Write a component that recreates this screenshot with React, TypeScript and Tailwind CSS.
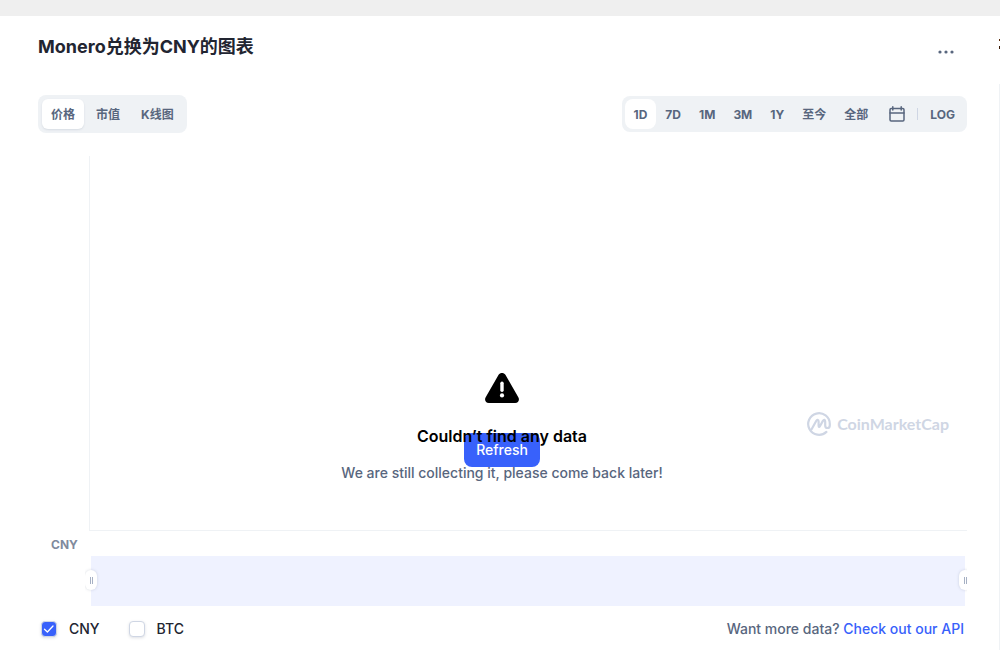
import { useState } from "react";

const chartTypes = ["价格", "市值", "K线图"];
const ranges = ["1D", "7D", "1M", "3M", "1Y", "至今", "全部"];

function DotsIcon() {
  return (
    <svg width="16" height="4" viewBox="0 0 16 4" fill="currentColor" aria-hidden="true">
      <circle cx="2" cy="2" r="1.6" />
      <circle cx="8" cy="2" r="1.6" />
      <circle cx="14" cy="2" r="1.6" />
    </svg>
  );
}

function CalendarIcon() {
  return (
    <svg width="16" height="16" viewBox="0 0 16 16" fill="none" stroke="currentColor" strokeWidth="1.5" strokeLinecap="round" strokeLinejoin="round" aria-hidden="true">
      <rect x="1" y="2.5" width="14" height="12.5" rx="1.2" />
      <path d="M1 7H15M3.8 0.8V4M12.2 0.8V4" />
    </svg>
  );
}

function WarningIcon() {
  return (
    <svg width="34" height="30" viewBox="0 0 34 30" aria-hidden="true">
      <path d="M13.6 1.8C15.1 -0.6 18.9 -0.6 20.4 1.8L33.3 24.3C34.9 27 33.3 30 30.2 30H3.8C0.7 30 -0.9 27 0.7 24.3Z" fill="#000" />
      <path d="M17 10.2V17.3" stroke="#fff" strokeWidth="3.4" strokeLinecap="round" />
      <circle cx="17" cy="22.4" r="2.1" fill="#fff" />
    </svg>
  );
}

function BrandIcon() {
  return (
    <svg width="24" height="24" viewBox="0 0 24 24" fill="none" stroke="currentColor" strokeWidth="2.2" strokeLinecap="round" strokeLinejoin="round" aria-hidden="true">
      <path d="M19.4 19.9A10.8 10.8 0 1 1 22.8 12V13.2C22.8 17 18.2 16.8 18.2 13.4V9.8C18.2 7.4 16.8 7.2 15.9 8.9L12.9 14.2C12.3 15.2 11.6 15 11.6 13.8V9.6C11.6 7.4 10.1 7.2 9.2 8.9L4.6 17.2" />
    </svg>
  );
}

function Handle() {
  return (
    <span className="flex h-5 w-3 items-center justify-center gap-px rounded-md bg-white shadow-[0_0_3px_rgba(88,102,126,0.25)]">
      <span className="h-[7px] w-px bg-[#a6b0c3]" />
      <span className="h-[7px] w-px bg-[#a6b0c3]" />
    </span>
  );
}

function Currency({ label, initial }: { label: string; initial: boolean }) {
  const [checked, setChecked] = useState(initial);
  return (
    <label className="flex items-center gap-3 text-sm leading-5 font-medium text-[#222531]">
      <span className="relative flex size-4">
        <input
          type="checkbox"
          checked={checked}
          onChange={() => setChecked(!checked)}
          className="size-4 appearance-none rounded-[4px] border border-[#cfd6e4] bg-white shadow-[0_1px_3px_rgba(88,102,126,0.2)] checked:bg-[#3861fb]"
        />
        {checked && (
          <svg className="pointer-events-none absolute inset-0" width="16" height="16" viewBox="0 0 16 16" fill="none" stroke="#fff" strokeWidth="1.3" strokeLinecap="round" strokeLinejoin="round" aria-hidden="true">
            <path d="M3.5 8.3L6.4 11L12 5" />
          </svg>
        )}
      </span>
      {label}
    </label>
  );
}

export default function App() {
  const [type, setType] = useState("价格");
  const [range, setRange] = useState("1D");
  return (
    <div className="min-h-screen overflow-hidden bg-white font-['Inter','Noto_Sans_CJK_SC',sans-serif] text-[#222531]">
      <div className="h-4 bg-[#efefef]" />
      <div className="flex">
        <main className="min-w-0 flex-1 pr-8 pl-[38px]">
          <header className="flex h-[79px] items-start justify-between pt-[17px] pr-[13px]">
            <h1 className="text-lg leading-7 font-bold">Monero兑换为CNY的图表</h1>
            <button aria-label="更多" className="mt-[17px] text-[#58667e]">
              <DotsIcon />
            </button>
          </header>

          <div className="flex items-center justify-between text-xs font-bold text-[#58667e]">
            <div className="flex gap-[3px] rounded-lg bg-[#eff2f5] p-1">
              {chartTypes.map((t) => (
                <button
                  key={t}
                  onClick={() => setType(t)}
                  className={`h-[30px] rounded-md px-[9px] pt-0.5 ${t === type ? "bg-white shadow-[0_1px_2px_rgba(88,102,126,0.15)]" : ""}`}
                >
                  {t}
                </button>
              ))}
            </div>
            <div className="flex items-center rounded-lg bg-[#eff2f5] p-[3px]">
              {ranges.map((r) => (
                <button
                  key={r}
                  onClick={() => setRange(r)}
                  className={`h-[30px] rounded-lg px-[9px] pt-0.5 ${r === range ? "bg-white" : ""}`}
                >
                  {r}
                </button>
              ))}
              <button aria-label="日期" className="ml-3 flex h-[30px] items-center">
                <CalendarIcon />
              </button>
              <span className="ml-3 h-3 w-px bg-[#cfd6e4]" />
              <button className="h-[30px] pt-0.5 pr-[9px] pl-3">LOG</button>
            </div>
          </div>

          <section className="relative mt-[23px]">
            <div className="ml-[51px] flex h-[375px] items-end justify-end border-b border-l border-[#eff2f5] pr-[18px] pb-[94px]">
              <div className="flex items-center gap-1.5 text-[#cfd6e4]">
                <BrandIcon />
                <span className="font-['Lato','Inter',sans-serif] text-base leading-6 font-bold">CoinMarketCap</span>
              </div>
            </div>
            <div className="absolute inset-x-0 top-[217px] flex flex-col items-center pr-px">
              <WarningIcon />
              <div className="relative mt-5 flex flex-col items-center">
                <button className="absolute top-[10px] h-[34px] rounded-lg bg-[#3861fb] px-3 text-sm font-medium text-white">
                  Refresh
                </button>
                <h2 className="relative text-base leading-[26px] font-semibold text-black">Couldn’t find any data</h2>
                <p className="relative mt-3.5 text-sm leading-5 font-medium text-[#58667e]">
                  We are still collecting it, please come back later!
                </p>
              </div>
            </div>
          </section>

          <p className="h-[25px] pt-1.5 pl-[13px] text-xs leading-4 font-bold text-[#808a9d]">CNY</p>

          <div className="relative ml-[47px] overflow-hidden pr-0.5 pl-1.5">
            <div className="h-[50px] bg-[#eff2ff]" />
            <div className="absolute top-3.5 left-0">
              <Handle />
            </div>
            <div className="absolute top-3.5 -right-1">
              <Handle />
            </div>
          </div>

          <footer className="flex items-center justify-between pt-[13px] pr-[3px] pl-[3px]">
            <div className="flex gap-[29px]">
              <Currency label="CNY" initial={true} />
              <Currency label="BTC" initial={false} />
            </div>
            <p className="text-sm leading-5 font-medium text-[#58667e]">
              Want more data?{" "}
              <a href="#api" className="text-[#3861fb]">
                Check out our API
              </a>
            </p>
          </footer>
        </main>
        <aside className="w-px overflow-hidden">
          <div className="flex h-[68px] items-start pt-[23px]">
            <span className="flex flex-col gap-[5px]" aria-hidden="true">
              <span className="h-0.5 w-px bg-[#5b2b0a]" />
              <span className="h-[3px] w-px bg-[#3b1a06]" />
            </span>
          </div>
          <div className="h-[566px] bg-[#eff2f5]" />
        </aside>
      </div>
    </div>
  );
}
